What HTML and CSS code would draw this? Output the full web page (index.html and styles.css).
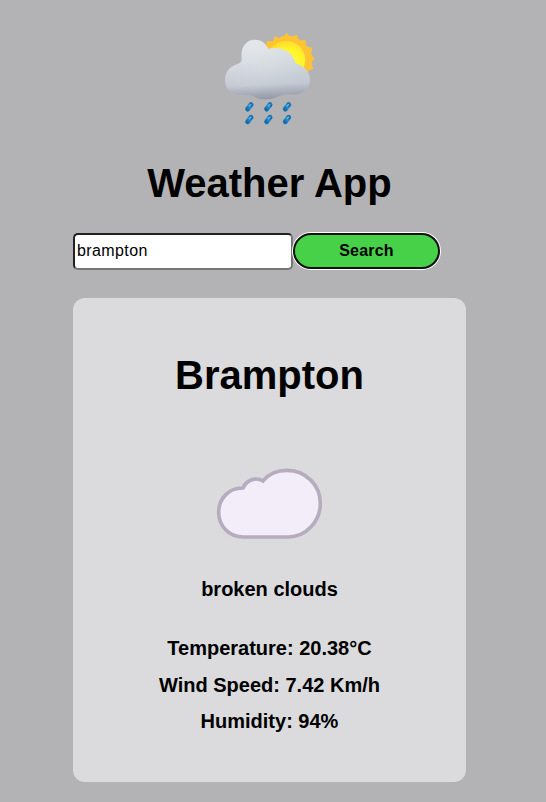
FILE: index.html
```html
<!DOCTYPE html>
<html lang="en">
<head>
<meta charset="utf-8">
<title>Weather App</title>
<link rel="stylesheet" href="styles.css">
</head>
<body>
<main class="app">
  <svg class="logo" viewBox="0 0 330 315" aria-hidden="true">
    <defs>
      <radialGradient id="sun" cx=".55" cy=".6" r=".6"><stop offset="0" stop-color="#fffb45"/><stop offset=".65" stop-color="#fff52b"/><stop offset="1" stop-color="#ffdc2e"/></radialGradient>
      <linearGradient id="cloud" x1=".45" y1="0" x2=".52" y2="1"><stop offset="0" stop-color="#dfe3e7"/><stop offset=".4" stop-color="#ced5db"/><stop offset=".75" stop-color="#c3c9d2"/><stop offset="1" stop-color="#9297a6"/></linearGradient>
      <radialGradient id="shine" cx=".35" cy=".2" r=".7"><stop offset="0" stop-color="#f3f4f6" stop-opacity=".35"/><stop offset="1" stop-color="#f3f4f6" stop-opacity="0"/></radialGradient>
      <linearGradient id="drop" x1="1" y1="0" x2="0" y2="1"><stop offset="0" stop-color="#1b6fae"/><stop offset=".5" stop-color="#2490cf"/><stop offset="1" stop-color="#176dac"/></linearGradient>
      <path id="cloud-shape" d="M80 100C76 66 94 44 119 44C138 44 151 53 160 71C195 64 234 77 241 115C268 122 285 142 285 164C285 194 260 212 226 208C207 206 197 211 185 216C162 226 135 225 115 214C104 209 91 209 78 209C49 209 30 194 30 165C30 139 46 124 68 117C78 113 80 109 80 100Z"/>
      <g id="rain"><path d="M5-6 -5 7" stroke="url(#drop)" stroke-width="15" stroke-linecap="round"/><path d="M5-7 0 -2" stroke="#70bbe3" stroke-width="3.5" stroke-linecap="round"/></g>
    </defs>
    <path fill="#ffc431" stroke="#ffc431" stroke-width="2" stroke-linejoin="round" d="M156 49l19 1 4-14 15 4 8-6 6 0 7-9 8 9 7 1 15-4 5 13 7 3 14-1 1 15 5 5 14 4-4 14 3 8 8 9-9 9 0 8 5 13-14 5-3 5 0 14-18-1-105-70z"/>
    <circle cx="214" cy="105" r="57" fill="url(#sun)"/>
    <use href="#cloud-shape" fill="url(#cloud)"/>
    <use href="#cloud-shape" fill="url(#shine)"/>
    <use href="#rain" x="103" y="245"/><use href="#rain" x="160" y="245"/><use href="#rain" x="216" y="245"/>
    <use href="#rain" x="103" y="283"/><use href="#rain" x="160" y="283"/><use href="#rain" x="216" y="283"/>
  </svg>
  <h1 class="title">Weather App</h1>
  <form class="search">
    <input class="search-input" type="text" value="brampton" aria-label="City">
    <button class="search-button" type="button">Search</button>
  </form>
  <section class="card">
    <h2 class="city">Brampton</h2>
    <svg class="condition-icon" viewBox="0 0 390 285" aria-hidden="true">
      <path d="M115 246C70 246 41 211 41 171C41 131 72 98 114 99C126 72 155 66 174 78C190 57 215 46 246 46C303 46 346 91 346 145C346 200 302 246 250 246Z" fill="#f3edf9" stroke="#b5acbe" stroke-width="11"/>
    </svg>
    <p class="condition">broken clouds</p>
    <div class="details">
      <p>Temperature: 20.38°C</p>
      <p>Wind Speed: 7.42 Km/h</p>
      <p>Humidity: 94%</p>
    </div>
  </section>
</main>
</body>
</html>
```
FILE: styles.css
```css
* { box-sizing: border-box; }
body {
  margin: 0;
  min-height: 100vh;
  background: #b3b3b5;
  color: #000;
  font-family: "Liberation Sans", Arial, sans-serif;
}
.app {
  width: 393px;
  margin-left: 73px;
  padding-top: 25px;
  display: flex;
  flex-direction: column;
  align-items: center;
}
.logo { display: block; width: 110px; height: 105px; }
.title {
  margin: 30px 0 27px;
  font-size: 40px;
  line-height: 46px;
}
.search { display: flex; width: 100%; height: 37px; }
.search-input {
  width: 220px;
  height: 37px;
  padding: 1px 2px 3px;
  border: 2px inset #767676;
  border-radius: 5px;
  background: #fff;
  color: #000;
  font: 16px "Liberation Sans", Arial, sans-serif;
  letter-spacing: 0.4px;
}
.search-button {
  width: 147px;
  height: 36px;
  padding: 0;
  border: 2px solid #101010;
  border-radius: 18px;
  box-shadow: 0 0 0 1px #fff;
  background: #46d148;
  color: #000;
  font: bold 16px "Liberation Sans", Arial, sans-serif;
  letter-spacing: 0.2px;
}
.card {
  width: 100%;
  height: 484px;
  margin-top: 28px;
  padding-top: 54px;
  border-radius: 12px;
  background: #dbdbdd;
  display: flex;
  flex-direction: column;
  align-items: center;
  font-size: 20px;
  font-weight: bold;
  line-height: 23px;
  text-align: center;
}
.city { margin: 0; font-size: 40px; line-height: 46px; }
.condition-icon { width: 130px; height: 95px; margin-top: 57px; }
.condition { margin: 28px 0 0; }
.details { display: grid; gap: 13.5px; margin-top: 36px; }
.details p { margin: 0; }
```
